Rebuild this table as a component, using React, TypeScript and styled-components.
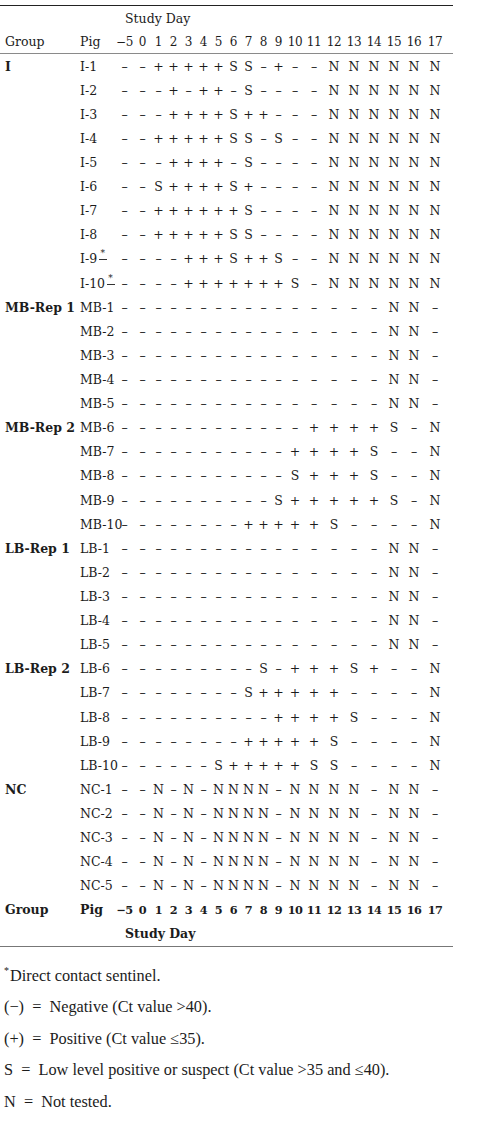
import React from "react";
import styled, { createGlobalStyle } from "styled-components";

const GlobalStyle = createGlobalStyle`
  html, body { margin: 0; padding: 0; background: #ffffff; }
  body { font-family: "DejaVu Serif", "Liberation Serif", serif; color: #1c1c1c; }
`;

const COLS = "19px 17px 15px 15px 15px 15px 15px 15px 15px 15px 15px 18px 20px 20px 20px 20px 20px 20px 22px";
const DAYS = ["−5", "0", "1", "2", "3", "4", "5", "6", "7", "8", "9", "10", "11", "12", "13", "14", "15", "16", "17"];

const dashes = (n: number) => Array(n).fill("-").join(" ");

type Row = { group?: string; pig: string; ref?: boolean; data: string };

const rows: Row[] = [
  { group: "I", pig: "I-1", data: "- - + + + + + S S - + - - N N N N N N" },
  { pig: "I-2", data: "- - - + - + + - S - - - - N N N N N N" },
  { pig: "I-3", data: "- - - + + + + S + + - - - N N N N N N" },
  { pig: "I-4", data: "- - + + + + + S S - S - - N N N N N N" },
  { pig: "I-5", data: "- - - + + + + - S - - - - N N N N N N" },
  { pig: "I-6", data: "- - S + + + + S + - - - - N N N N N N" },
  { pig: "I-7", data: "- - + + + + + + S - - - - N N N N N N" },
  { pig: "I-8", data: "- - + + + + + S S - - - - N N N N N N" },
  { pig: "I-9", ref: true, data: "- - - - + + + S + + S - - N N N N N N" },
  { pig: "I-10", ref: true, data: "- - - - + + + + + + + S - N N N N N N" },
  { group: "MB-Rep 1", pig: "MB-1", data: dashes(16) + " N N -" },
  { pig: "MB-2", data: dashes(16) + " N N -" },
  { pig: "MB-3", data: dashes(16) + " N N -" },
  { pig: "MB-4", data: dashes(16) + " N N -" },
  { pig: "MB-5", data: dashes(16) + " N N -" },
  { group: "MB-Rep 2", pig: "MB-6", data: dashes(12) + " + + + + S - N" },
  { pig: "MB-7", data: dashes(11) + " + + + + S - - N" },
  { pig: "MB-8", data: dashes(11) + " S + + + S - - N" },
  { pig: "MB-9", data: dashes(10) + " S + + + + + S - N" },
  { pig: "MB-10", data: dashes(8) + " + + + + + S - - - - N" },
  { group: "LB-Rep 1", pig: "LB-1", data: dashes(16) + " N N -" },
  { pig: "LB-2", data: dashes(16) + " N N -" },
  { pig: "LB-3", data: dashes(16) + " N N -" },
  { pig: "LB-4", data: dashes(16) + " N N -" },
  { pig: "LB-5", data: dashes(16) + " N N -" },
  { group: "LB-Rep 2", pig: "LB-6", data: dashes(9) + " S - + + + S + - - N" },
  { pig: "LB-7", data: dashes(8) + " S + + + + + - - - - N" },
  { pig: "LB-8", data: dashes(10) + " + + + + S - - - N" },
  { pig: "LB-9", data: dashes(8) + " + + + + + S - - - - N" },
  { pig: "LB-10", data: dashes(6) + " S + + + + + S S - - - - N" },
  { group: "NC", pig: "NC-1", data: "- - N - N - N N N N - N N N N - N N -" },
  { pig: "NC-2", data: "- - N - N - N N N N - N N N N - N N -" },
  { pig: "NC-3", data: "- - N - N - N N N N - N N N N - N N -" },
  { pig: "NC-4", data: "- - N - N - N N N N - N N N N - N N -" },
  { pig: "NC-5", data: "- - N - N - N N N N - N N N N - N N -" },
];

const Page = styled.div`
  width: 453px;
  padding-top: 5px;
`;

const Table = styled.div`
  border-top: 1px solid #222;
  font-size: 12.5px;
`;

const Line = styled.div<{ $h?: number; $rule?: boolean; $bold?: boolean }>`
  display: grid;
  grid-template-columns: 75px 45px 1fr;
  align-items: center;
  height: ${(p) => p.$h ?? 24}px;
  box-sizing: border-box;
  border-bottom: ${(p) => (p.$rule ? "1px solid #8a8a8a" : "none")};
  font-weight: ${(p) => (p.$bold ? 700 : 400)};
  white-space: nowrap;
`;

const GroupCell = styled.div`
  padding-left: 5px;
  font-weight: 700;
`;

const HeadCell = styled.div`
  padding-left: 5px;
`;

const PigCell = styled.div`
  padding-left: 5px;
  display: flex;
  align-items: center;
`;

const Caption = styled.div`
  padding-left: 5px;
`;

const Days = styled.div<{ $head?: boolean; $bold?: boolean }>`
  display: grid;
  grid-template-columns: ${COLS};
  margin-left: -5px;
  font-size: ${(p) => (p.$bold ? "11.3px" : p.$head ? "12px" : "inherit")};
  letter-spacing: ${(p) => (p.$bold ? "-0.6px" : p.$head ? "-0.3px" : "0")};
`;

const Mark = styled.span`
  text-align: center;
`;

const FootRef = styled.span`
  display: inline-flex;
  flex-direction: column;
  align-items: center;
  width: 9px;
  margin-left: 1px;
  margin-top: -8px;
  font-size: 9px;
  line-height: 9px;
  &::after {
    content: "";
    width: 8px;
    border-top: 1px solid #333;
    margin-top: 1px;
  }
`;

const Notes = styled.div`
  border-top: 1px solid #777;
  padding-top: 13px;
  font-family: "Liberation Serif", "Times New Roman", serif;
  font-size: 16.3px;
  color: #1c1c1c;
`;

const Note = styled.div`
  height: 31.5px;
  line-height: 31.5px;
  padding-left: 4px;
  white-space: pre;
`;

const Star = styled.sup`
  font-size: 10px;
  vertical-align: 7px;
  line-height: 0;
  margin-right: 1px;
`;

const glyph = (t: string) => (t === "-" ? "–" : t);

const DayRow: React.FC<{ items: string[]; head?: boolean; bold?: boolean }> = ({ items, head, bold }) => (
  <Days $head={head} $bold={bold}>
    {items.map((t, i) => (
      <Mark key={i}>{t}</Mark>
    ))}
  </Days>
);

export default function App() {
  return (
    <>
      <GlobalStyle />
      <Page>
        <Table>
          <Line>
            <span />
            <span />
            <Caption>Study Day</Caption>
          </Line>
          <Line $rule>
            <HeadCell>Group</HeadCell>
            <HeadCell>Pig</HeadCell>
            <DayRow items={DAYS} head />
          </Line>
          {rows.map((r) => (
            <Line key={r.pig} $h={24.12}>
              <GroupCell>{r.group ?? ""}</GroupCell>
              <PigCell>
                {r.pig}
                {r.ref && <FootRef>*</FootRef>}
              </PigCell>
              <DayRow items={r.data.split(" ").map(glyph)} />
            </Line>
          ))}
          <Line $bold>
            <HeadCell>Group</HeadCell>
            <HeadCell>Pig</HeadCell>
            <DayRow items={DAYS} head bold />
          </Line>
          <Line $bold>
            <span />
            <span />
            <Caption>Study Day</Caption>
          </Line>
        </Table>
        <Notes>
          <Note>
            <Star>*</Star>Direct contact sentinel.
          </Note>
          <Note>{"(−)  =  Negative (Ct value >40)."}</Note>
          <Note>{"(+)  =  Positive (Ct value ≤35)."}</Note>
          <Note>{"S  =  Low level positive or suspect (Ct value >35 and ≤40)."}</Note>
          <Note>{"N  =  Not tested."}</Note>
        </Notes>
      </Page>
    </>
  );
}
